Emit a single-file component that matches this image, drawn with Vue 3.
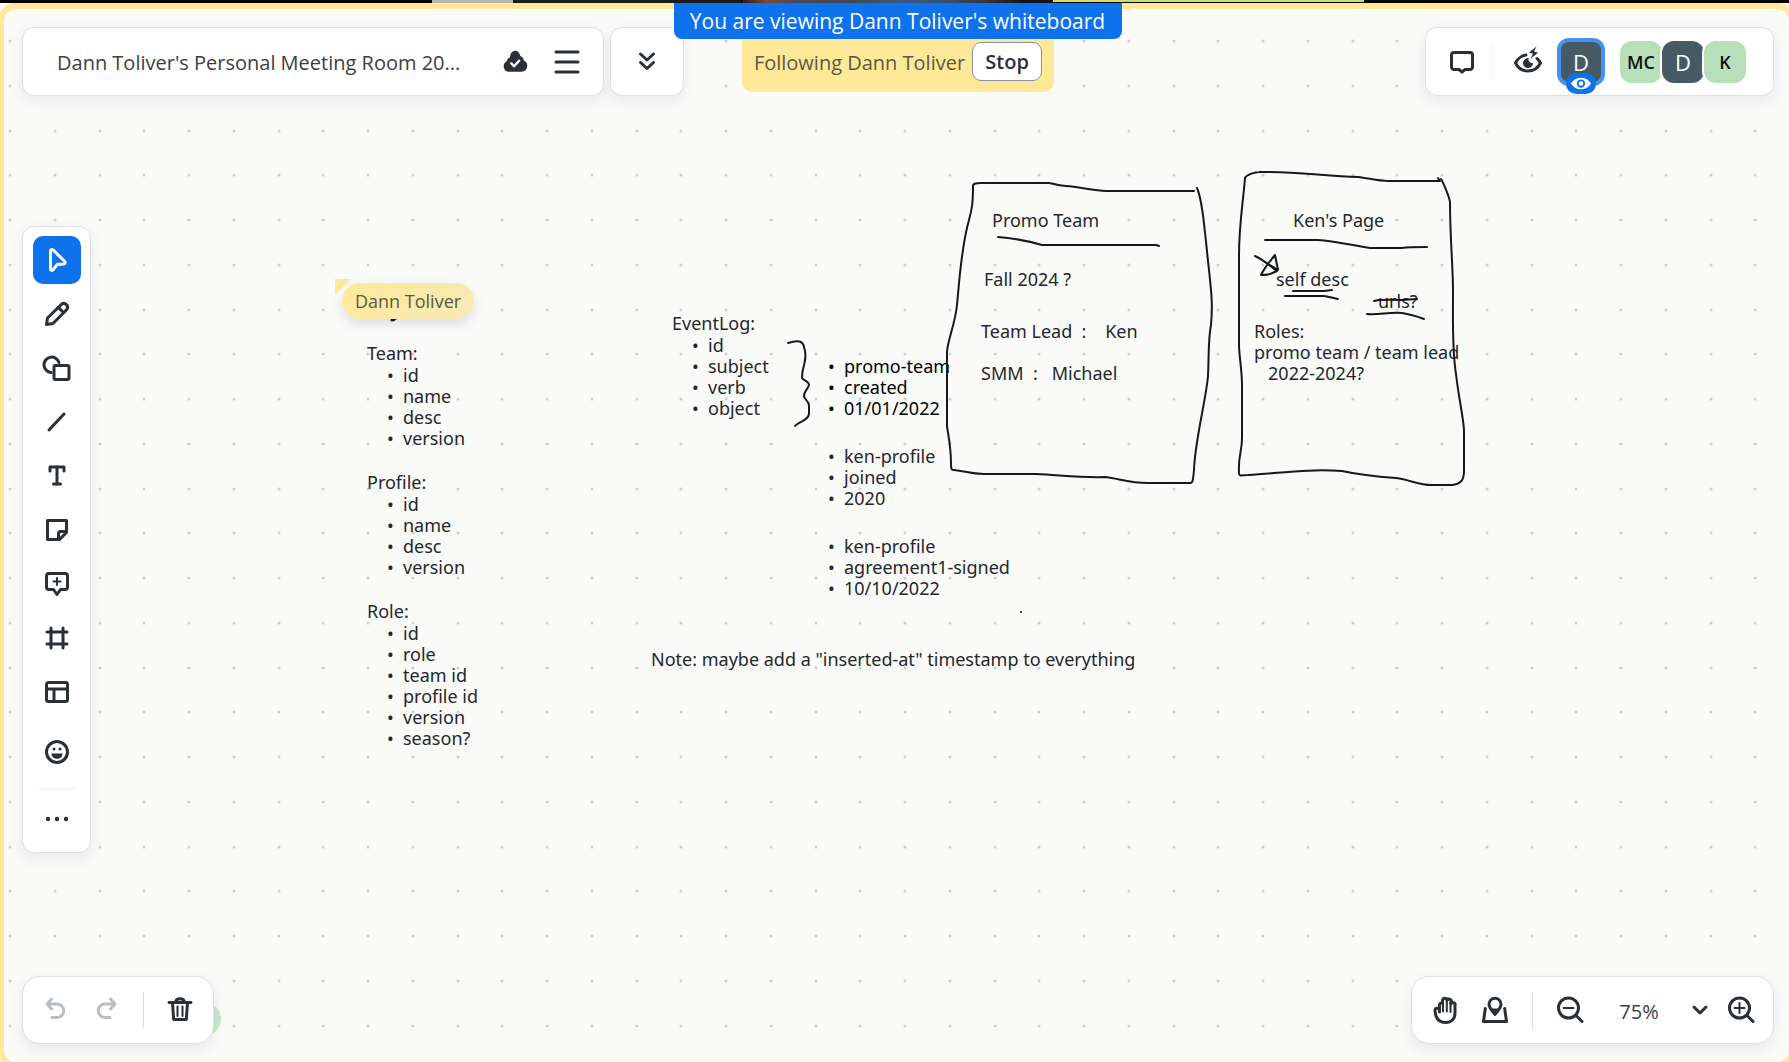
<script setup>
const step = 179 / 4
const dots = []
for (let r = 0; r < 23; r++) {
  for (let c = 0; c < 60; c++) {
    dots.push(`M${Math.round(10 + c * step)} ${Math.round(41 + r * step)}h0`)
  }
}
const dotPath = dots.join('')

const lists = [
  { x: 367, y: 343, title: 'Team:', items: ['id', 'name', 'desc', 'version'] },
  { x: 367, y: 472, title: 'Profile:', items: ['id', 'name', 'desc', 'version'] },
  { x: 367, y: 601, title: 'Role:', items: ['id', 'role', 'team id', 'profile id', 'version', 'season?'] },
  { x: 672, y: 313, title: 'EventLog:', items: ['id', 'subject', 'verb', 'object'] },
  { x: 808, y: 356, dark: true, items: ['promo-team', 'created', '01/01/2022'] },
  { x: 808, y: 446, items: ['ken-profile', 'joined', '2020'] },
  { x: 808, y: 536, items: ['ken-profile', 'agreement1-signed', '10/10/2022'] },
]
const notes = [
  { x: 651, y: 649, text: 'Note: maybe add a "inserted-at" timestamp to everything' },
  { x: 992, y: 210, text: 'Promo Team' },
  { x: 984, y: 269, text: 'Fall 2024 ?' },
  { x: 981, y: 321, text: 'Team Lead  :    Ken' },
  { x: 981, y: 363, text: 'SMM  :   Michael' },
  { x: 1293, y: 210, text: "Ken's Page" },
  { x: 1276, y: 269, text: 'self desc' },
  { x: 1378, y: 291, text: 'urls?' },
  { x: 1254, y: 321, text: 'Roles:\npromo team / team lead\n   2022-2024?' },
]
const at = (n) => ({ left: n.x + 'px', top: n.y + 'px' })

const tools = [
  { name: 'Select', d: ['M7.500 5v18c0 1.400 1.700 2 2.600.900l3.900-5.300 6.800-.700c1.300-.200 1.800-1.800.800-2.600L10.200 4c-1-.900-2.700-.300-2.700 1z'] },
  { name: 'Pen', d: ['M3.500 24.500l1-6.500L18.500 4.200a3.800 3.800 0 0 1 5.300 5.300L10 23.500z', 'M15.500 7.500l5 5'] },
  { name: 'Shapes', d: ['M8 18.500A7.700 7.700 0 1 1 16 8.500', 'M12.500 11.500h12a1.500 1.500 0 0 1 1.500 1.500v11a1.500 1.500 0 0 1-1.500 1.500h-12A1.500 1.500 0 0 1 11 24V13a1.500 1.500 0 0 1 1.500-1.500z'] },
  { name: 'Line', d: ['M6 22L21 6'] },
  { name: 'Text', d: ['M7 9V5h14v4', 'M14 5v17', 'M10.500 22h7'] },
  { name: 'Sticky note', d: ['M4.500 4.500h19v12l-7 7h-12z', 'M15.500 23v-5.500a2 2 0 0 1 2-2H23'] },
  { name: 'Comment', d: ['M6 3.500h16a2.500 2.500 0 0 1 2.500 2.500v11a2.500 2.500 0 0 1-2.500 2.500h-4.500l-3.500 5-3.500-5H6A2.500 2.500 0 0 1 3.500 17V6A2.500 2.500 0 0 1 6 3.500z'], thin: 'M14 8v7M10.500 11.500h7' },
  { name: 'Frame', d: ['M8 4v20M20 4v20M4 8h20M4 20h20'] },
  { name: 'Templates', d: ['M5.500 4.500h17a2 2 0 0 1 2 2v15a2 2 0 0 1-2 2h-17a2 2 0 0 1-2-2v-15a2 2 0 0 1 2-2z', 'M4 11h20M11 11v12'] },
]
</script>

<template>
  <main class="app">
    <div class="video-strip" aria-hidden="true">
      <i class="wall"></i><i class="shade"></i><i class="face"></i><i class="lime"></i>
    </div>

    <section class="board" aria-label="Whiteboard">
      <svg class="layer" aria-hidden="true">
        <path :d="dotPath" stroke="#cfcfce" stroke-width="3" stroke-linecap="round" />
      </svg>

      <div v-for="(l, i) in lists" :key="'l' + i" class="node" :class="{ dark: l.dark }" :style="at(l)">
        <p v-if="l.title">{{ l.title }}</p>
        <ul :class="{ inset: l.title }">
          <li v-for="t in l.items" :key="t">{{ t }}</li>
        </ul>
      </div>
      <p v-for="n in notes" :key="n.text" class="node" :style="at(n)">{{ n.text }}</p>

      <svg class="layer ink" aria-hidden="true">
        <path d="M973 186C973 183 977 183 981 183H1049C1055 184 1060 186 1066 186C1080 187 1094 191 1106 191H1194" />
        <path d="M973 186C973 203 972 209 969 220C961 248 959 285 957 305C955 325 948 338 947 352V426C949 440 951 447 951 464C951 470 952 470 954 470C965 471 970 474 984 474H1036C1060 475 1080 478 1106 477C1120 479 1130 483 1148 483H1190C1193 483 1193 480 1194 470C1195 440 1206 400 1208 376C1209 356 1208 340 1211 325C1213 302 1211 290 1209 270C1205 235 1203 202 1197 188" />
        <path d="M998 237C1012 238 1028 241 1042 245H1156L1159 246" />
        <path d="M1245 178C1246 175 1255 172 1259 172C1290 171 1325 176 1358 177C1368 178 1378 181 1388 181H1440L1438 178" />
        <path d="M1245 178C1243 203 1239 225 1239 255V345C1239 355 1242 370 1242 385V438C1242 452 1238 456 1239 473C1239 477 1242 475 1248 475C1290 472 1310 469 1342 471C1360 475 1382 477 1396 478C1410 480 1420 485 1431 485H1452C1461 484 1464 480 1464 471V430C1463 415 1459 400 1456 374C1452 350 1453 320 1453 292C1453 265 1450 240 1450 202C1449 196 1443 182 1441 179" />
        <path d="M1265 240H1318C1335 241 1355 246 1370 248H1402C1408 247 1417 247 1427 247" />
        <path d="M1255 256C1264 260 1270 266 1277 271C1269 275 1266 275 1261 275C1265 267 1270 261 1275 255L1278 270L1270 265" />
        <path d="M1293 291H1324L1332 290M1285 296H1324C1330 297 1333 298 1338 299" />
        <path d="M1374 301C1380 299 1390 300 1401 300L1417 299M1367 314C1380 315 1388 312 1402 313C1409 314 1416 316 1424 319" />
        <path d="M788 343C794 341 803 339 804 347C807 356 805 360 804 365C802 372 802 376 802 378C804 381 809 381 809 385C808 389 804 391 804 396C804 400 809 400 809 406V414C808 421 798 422 795 426" />
        <path d="M1021 612h0" />
        <path class="tail" d="M392 320C394 320 395 319 396 317" />
      </svg>

      <div class="cursor-mark"></div>
      <div class="cursor-label">Dann Toliver</div>
      <span class="presence"></span>
    </section>

    <div class="frame" aria-hidden="true"></div>

    <header class="topbar">
      <div class="group">
        <div class="panel title-panel">
          <h1>Dann Toliver's Personal Meeting Room 20...</h1>
          <svg class="ic" viewBox="0 0 28 28" role="img" aria-label="Saved"><path fill="#2b3036" d="M7.500 24.500A6 6 0 0 1 5 13.200 7 7 0 0 1 8.500 9C9 4.500 11.500 2 14 2s5 2 5.800 5.500a6 6 0 0 1 3.700 5A6.300 6.300 0 0 1 21 24.500z" /><path d="M10 15.500l3 3 5.500-6" fill="none" stroke="#fff" stroke-width="2.500" /></svg>
          <button class="btn" aria-label="Menu"><svg class="ic" viewBox="0 0 28 28"><path d="M3 4h22M3 14h22M3 24h22" /></svg></button>
        </div>
        <button class="panel more-panel" aria-label="Expand"><svg class="ic" viewBox="0 0 28 28"><path d="M7.500 6l6.500 6 6.500-6M7.500 14.500l6.500 6 6.500-6" /></svg></button>
      </div>

      <div class="panel right-panel">
        <button class="btn" aria-label="Comments"><svg class="ic" viewBox="0 0 28 28"><path d="M6 4.500h16a2.500 2.500 0 0 1 2.500 2.500v12a2.500 2.500 0 0 1-2.500 2.500h-5L14 24l-3-2.500H6A2.500 2.500 0 0 1 3.500 19V7A2.500 2.500 0 0 1 6 4.500z" /></svg></button>
        <span class="rule faint"></span>
        <button class="btn" aria-label="Follow"><svg class="ic" viewBox="0 0 28 28"><path d="M12 7C7 7.500 3 12 1.500 15c2.500 5 7 8 12.500 8s10-3 12.500-8c-.800-1.600-2-3.200-3.500-4.500" /><path d="M14 10.500a4.500 4.500 0 1 0 4.500 5c-2.500 0-5-2-4.500-5z" fill="#2b3036" stroke-width="1" /><path d="M22.500-1.500l-7.500 6 4 1.300-2.500 5 7.500-6-4-1.300z" fill="#2b3036" stroke="none" /></svg></button>
        <div class="me">
          <span class="avatar slate">D</span>
          <span class="eye"><svg viewBox="0 0 24 16"><path d="M1 8C6-.500 18-.500 23 8 18 16.500 6 16.500 1 8z" fill="#fff" /><circle cx="12" cy="8" r="3.500" fill="#fff" stroke="#0e72ed" stroke-width="2" /></svg></span>
        </div>
        <div class="people">
          <span class="avatar green">MC</span><span class="avatar slate">D</span><span class="avatar green">K</span>
        </div>
      </div>
    </header>

    <div class="notices">
      <div class="viewing">You are viewing Dann Toliver's whiteboard</div>
      <div class="following"><span>Following Dann Toliver</span><button>Stop</button></div>
    </div>

    <nav class="panel toolbar" aria-label="Tools">
      <button v-for="(t, i) in tools" :key="t.name" class="tool" :class="{ active: i === 0 }" :aria-label="t.name">
        <svg class="ic" viewBox="0 0 28 28"><path v-for="d in t.d" :key="d" :d="d" /><path v-if="t.thin" :d="t.thin" class="thin" /></svg>
      </button>
      <button class="tool emoji" aria-label="Reactions"><svg class="ic" viewBox="0 0 28 28"><circle cx="14" cy="14" r="10.500" /><path d="M8.500 15.500h11c0 7-11 7-11 0z" fill="#2b3036" stroke="none" /><circle class="solid" cx="11" cy="11" r="1.500" /><circle class="solid" cx="17" cy="11" r="1.500" /></svg></button>
      <hr />
      <button class="tool" aria-label="More"><svg class="ic" viewBox="0 0 28 28"><circle class="solid" cx="5" cy="14" r="2.200" /><circle class="solid" cx="14" cy="14" r="2.200" /><circle class="solid" cx="23" cy="14" r="2.200" /></svg></button>
    </nav>

    <footer class="bottombar">
      <div class="panel history">
        <button class="btn" aria-label="Undo" disabled><svg class="ic" viewBox="0 0 28 28"><path d="M9.500 3L5 8l4.500 5M5.500 8H15a6.700 6.700 0 0 1 0 13.500H10" /></svg></button>
        <button class="btn" aria-label="Redo" disabled><svg class="ic" viewBox="0 0 28 28"><path d="M18.500 3L23 8l-4.500 5M22.500 8H13a6.700 6.700 0 0 0 0 13.500h5" /></svg></button>
        <span class="rule"></span>
        <button class="btn" aria-label="Delete"><svg class="ic" viewBox="0 0 28 28"><path d="M3 6.500h22M9.500 6c.500-4.500 8.500-4.500 9 0M6.500 7l1.200 16.500h12.600L21.500 7" /><path class="thin" d="M11.500 10.500v9.500M16.500 10.500v9.500" /></svg></button>
      </div>
      <div class="panel zoom">
        <button class="btn" aria-label="Pan"><svg class="ic" viewBox="0 0 28 28"><path d="M8.500 16V8.500a1.800 1.800 0 0 1 3-1V4.500a2.200 2.200 0 0 1 4.500 0 2 2 0 0 1 4 1.500v2a2 2 0 0 1 4 1.500V17c0 6-3.500 9.500-9.500 9.500C8 26.500 4.500 22 4 14.500c-.200-2.500 2.500-3 4.500-1" /><path class="thin" d="M12 7v8.500M15.800 5v10.500M19.500 7v9" /></svg></button>
        <button class="btn" aria-label="Map"><svg class="ic" viewBox="0 0 28 28"><path d="M14 2.300a6 6 0 0 1 6 6c0 4-3.500 6.700-6 10.200-2.500-3.500-6-6.200-6-10.200a6 6 0 0 1 6-6z" /><path d="M9 12.500h10l-5 7z" fill="#2b3036" stroke="none" /><path d="M4.300 12.500L2.500 25.500h23L23.700 12.500" /></svg></button>
        <span class="rule"></span>
        <button class="btn" aria-label="Zoom out"><svg class="ic" viewBox="0 0 28 28"><circle cx="12.500" cy="12" r="10" /><path d="M20 19.500l6 6" /><path class="thin" d="M7.500 12h10" /></svg></button>
        <output>75%</output>
        <button class="btn small" aria-label="Zoom levels"><svg class="ic" viewBox="0 0 28 28"><path d="M8 11l6 6 6-6" /></svg></button>
        <button class="btn" aria-label="Zoom in"><svg class="ic" viewBox="0 0 28 28"><circle cx="12.500" cy="12" r="10" /><path d="M20 19.500l6 6" /><path class="thin" d="M7.500 12h10M12.500 7v10" /></svg></button>
      </div>
    </footer>
  </main>
</template>

<style>
body { background: #fafaf9; }
</style>

<style scoped>
* { box-sizing: border-box; }
.app {
  position: relative;
  display: flex;
  flex-direction: column;
  justify-content: space-between;
  min-height: 100vh;
  overflow: hidden;
  padding: 27px 15px 18px 22px;
  background: #fafaf9;
  color: #3c4043;
  font-family: "Open Sans", "Noto Sans", sans-serif;
}
h1, p, ul { margin: 0; padding: 0; font-weight: 400; }
button { font: inherit; color: inherit; padding: 0; border: 0; background: none; }

.video-strip { position: absolute; inset: 0 0 auto; height: 3px; background: #000; z-index: 4; }
.video-strip i { position: absolute; top: 0; height: 3px; }
.video-strip .wall { left: 432px; width: 81px; background: #b9b4ac; }
.video-strip .shade { left: 513px; width: 228px; background: #1c1a1c; }
.video-strip .face { left: 742px; width: 311px; background: linear-gradient(90deg, #2a1c1c, #7a4a3c 8%, #4a4658 18%, #45454f 35%, #3a5a80 50%, #34507a 65%, #3a3436 78%, #151515 90%); }
.video-strip .lime { left: 1053px; width: 311px; height: 2px; background: #c9de7b; }

.frame {
  position: absolute;
  inset: 3px -6px -6px -2px;
  border: 6px solid #ffe999;
  border-radius: 18px;
  pointer-events: none;
}

.board { position: absolute; inset: 0; }
.layer { position: absolute; inset: 0; width: 100%; height: 100%; }
.ink { fill: none; stroke: #15181c; stroke-width: 2; stroke-linecap: round; stroke-linejoin: round; }
.ink .tail { stroke-width: 3; }
.node {
  position: absolute;
  font: 18px/21px "Noto Sans", sans-serif;
  color: #24272b;
  white-space: pre;
}
.node.dark { color: #000; }
.node ul { list-style: none; padding-left: 36px; }
.node ul.inset { padding-top: 1px; }
.node li::before { content: "•"; display: inline-block; width: 16px; margin-left: -16px; }
.cursor-mark { position: absolute; left: 335px; top: 279px; width: 16px; height: 16px; background: #ffe999; clip-path: polygon(0 0, 100% 0, 0 100%); }
.cursor-label {
  position: absolute;
  left: 342px;
  top: 283px;
  padding: 0 13px;
  border-radius: 18px;
  background: linear-gradient(135deg, #ffe999, #f6e9b8);
  box-shadow: 0 5px 12px rgba(60, 60, 80, 0.14);
  color: #5c5844;
  font-size: 18px;
  line-height: 36px;
}
.presence { position: absolute; left: 187px; bottom: 26px; width: 34px; height: 34px; border-radius: 50%; background: #c9e8cb; }

.panel {
  display: flex;
  align-items: center;
  background: #fff;
  border: 1px solid #dedfe8;
  border-radius: 12px;
  box-shadow: 0 5px 14px rgba(60, 60, 80, 0.09);
}
.topbar, .bottombar { position: relative; display: flex; justify-content: space-between; }
.group { display: flex; gap: 6px; }
.title-panel { width: 582px; height: 69px; padding: 0 11px 0 34px; }
.title-panel h1 { flex: 1; padding-top: 3px; font-size: 20px; line-height: 28px; white-space: nowrap; }
.title-panel > .ic { margin-right: 14px; }
.more-panel { width: 74px; height: 69px; justify-content: center; }
.right-panel { width: 349px; height: 69px; padding-left: 12px; }
.right-panel .rule { margin: 0 11px 0 6px; }

.btn { display: flex; align-items: center; justify-content: center; width: 50px; height: 48px; }
.right-panel .btn { width: 48px; }
.ic { width: 28px; height: 28px; flex: none; fill: none; stroke: #2b3036; stroke-width: 3; stroke-linecap: round; stroke-linejoin: round; overflow: visible; }
.ic .thin { stroke-width: 2; }
.ic .solid { fill: #2b3036; stroke: none; }
.title-panel > .ic { stroke: none; width: 26px; }
.btn:disabled .ic { stroke: #b9bdc4; }
.rule { width: 1px; height: 36px; background: #d9dade; }
.rule.faint { background: #f0f0f1; }

.me { position: relative; margin-left: 9px; margin-right: 19px; }
.avatar { display: flex; align-items: center; justify-content: center; width: 42px; height: 42px; border-radius: 12px; font-size: 22px; }
.me .avatar { width: 40px; height: 40px; border-radius: 8px; box-shadow: 0 0 0 4px #4791f0; }
.slate { background: #465a66; color: #fff; }
.green { background: #b8e0b8; color: #111; font-size: 18px; font-weight: 600; }
.eye { position: absolute; left: 5px; top: 31px; display: flex; align-items: center; justify-content: center; width: 30px; height: 21px; border-radius: 10px; background: #0e72ed; }
.eye svg { width: 22px; height: 15px; }
.people { display: flex; }
.people .avatar + .avatar { box-shadow: 0 0 0 2px #fff; }

.notices {
  position: absolute;
  top: 3px;
  left: 0;
  right: 0;
  margin: 0 -5px 0 2px;
  display: flex;
  flex-direction: column;
  align-items: center;
  z-index: 3;
}
.viewing { padding: 1px 17px 0 16px; border-radius: 0 0 8px 8px; background: #0e72ed; color: #fff; font-size: 21px; line-height: 35px; }
.following { display: flex; align-items: center; gap: 7px; height: 53px; padding: 0 12px 8px; border-radius: 0 0 10px 10px; background: #ffe999; color: #5c5844; font-size: 20px; }
.following span { padding-top: 2px; }
.following button { width: 70px; height: 39px; border: 1px solid #8c93a0; border-radius: 9px; background: #fff; color: #2b3036; font-weight: 600; }

.toolbar { position: relative; flex-direction: column; align-self: flex-start; width: 69px; gap: 6px; padding: 9px 0; margin-bottom: -6px; }
.tool { display: flex; align-items: center; justify-content: center; width: 48px; height: 48px; border-radius: 10px; }
.tool.active { background: #0e72ed; }
.tool.active .ic { stroke: #fff; }
.tool.emoji { margin-top: 6px; }
.toolbar hr { width: 36px; height: 1px; margin: 6px 0 0; border: 0; background: #eeeef0; }

.history, .zoom { height: 68px; border-radius: 18px; }
.history { width: 192px; padding: 0 8px; }
.history .rule { margin: 0 11px 0 12px; }
.zoom { width: 363px; padding-left: 8px; }
.zoom .rule { margin: 0 12px; }
.zoom output { width: 88px; padding-top: 2px; text-align: center; font-size: 20px; }
.btn.small { width: 34px; }
.zoom .btn.small + .btn { width: 48px; }
</style>
